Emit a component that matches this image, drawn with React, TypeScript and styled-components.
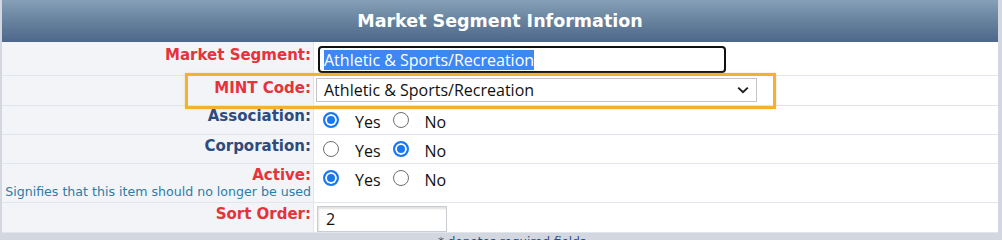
import { FC } from 'react';
import styled, { createGlobalStyle } from 'styled-components';

const colors = {
  page: '#d3d8e0',
  labelBg: '#f2f4f8',
  rule: '#e2e5eb',
  red: '#e5333c',
  blue: '#2d4b7d',
  hint: '#2f7ca4',
  radio: '#1877f2',
  highlight: '#3d87f0',
  annotate: '#f5b02e',
};

const LABEL_FONT = `'DejaVu Sans', Verdana, sans-serif`;
const FIELD_FONT = `'Open Sans', 'Segoe UI', sans-serif`;

const GlobalStyle = createGlobalStyle`
  html, body {
    margin: 0;
    padding: 0;
    background: ${colors.page};
    font-family: ${LABEL_FONT};
  }
`;

interface RadioPairProps {
  value: 'yes' | 'no';
}

const RadioPair: FC<RadioPairProps> = ({ value }) => (
  <RadioGroup>
    <RadioOption>
      <Radio $checked={value === 'yes'} />
      <RadioText>Yes</RadioText>
    </RadioOption>
    <RadioOption>
      <Radio $checked={value === 'no'} />
      <RadioText>No</RadioText>
    </RadioOption>
  </RadioGroup>
);

const App: FC = () => (
  <>
    <GlobalStyle />
    <Page>
      <Panel>
        <Header>Market Segment Information</Header>

        <Row $h={34}>
          <LabelCell $top={4}>
            <Label $required>Market Segment:</Label>
          </LabelCell>
          <ValueCell $pad='4px 0 0 4px'>
            <TextBox>
              <Selected>Athletic &amp; Sports/Recreation</Selected>
            </TextBox>
          </ValueCell>
        </Row>

        <Row $h={30}>
          <LabelCell $top={3}>
            <Label $required>MINT Code:</Label>
          </LabelCell>
          <ValueCell $pad='2px 0 0 2px'>
            <SelectBox>
              <span>Athletic &amp; Sports/Recreation</span>
              <svg width='12' height='8' viewBox='0 0 12 8'>
                <path d='M1.2 1.6 6 6.2l4.8-4.6' fill='none' stroke='#1d1d1d' strokeWidth='1.9' />
              </svg>
            </SelectBox>
          </ValueCell>
        </Row>

        <Row $h={29}>
          <LabelCell $top={1}>
            <Label>Association:</Label>
          </LabelCell>
          <ValueCell $pad='6px 0 0 9px'>
            <RadioPair value='yes' />
          </ValueCell>
        </Row>

        <Row $h={29}>
          <LabelCell $top={2}>
            <Label>Corporation:</Label>
          </LabelCell>
          <ValueCell $pad='6px 0 0 9px'>
            <RadioPair value='no' />
          </ValueCell>
        </Row>

        <Row $h={39}>
          <LabelCell $top={2}>
            <Label $required>Active:</Label>
            <Hint>Signifies that this item should no longer be used</Hint>
          </LabelCell>
          <ValueCell $pad='6px 0 0 9px'>
            <RadioPair value='yes' />
          </ValueCell>
        </Row>

        <Row $h={30}>
          <LabelCell $top={2}>
            <Label $required>Sort Order:</Label>
          </LabelCell>
          <ValueCell $pad='3px 0 0 3px'>
            <NumberBox>2</NumberBox>
          </ValueCell>
        </Row>

        <Callout />
      </Panel>
      <Footer>* denotes required fields</Footer>
    </Page>
  </>
);

const Page = styled.div`
  padding: 0 4px 0 2px;
`;

const Panel = styled.div`
  position: relative;
  background: #fff;
`;

const Header = styled.div`
  height: 42px;
  display: flex;
  align-items: center;
  justify-content: center;
  padding-bottom: 1px;
  box-sizing: border-box;
  background: linear-gradient(to bottom, #85a0b6 0%, #6a85a0 45%, #4d678a 100%);
  color: #fff;
  font-family: ${LABEL_FONT};
  font-weight: bold;
  font-size: 17.5px;
`;

const Row = styled.div<{ $h: number }>`
  display: grid;
  grid-template-columns: 312px 1fr;
  height: ${({ $h }) => $h}px;
  border-bottom: 1px solid ${colors.rule};
  box-sizing: border-box;
`;

const LabelCell = styled.div<{ $top: number }>`
  background: ${colors.labelBg};
  border-right: 1px solid ${colors.rule};
  text-align: right;
  padding: ${({ $top }) => $top}px 2px 0 0;
  display: flex;
  flex-direction: column;
  align-items: flex-end;
`;

const Label = styled.div<{ $required?: boolean }>`
  font-family: ${LABEL_FONT};
  font-weight: bold;
  font-size: 15px;
  line-height: 18px;
  color: ${({ $required }) => ($required ? colors.red : colors.blue)};
`;

const Hint = styled.div`
  font-family: ${LABEL_FONT};
  font-size: 12.6px;
  line-height: 14px;
  color: ${colors.hint};
  margin-top: 1px;
`;

const ValueCell = styled.div<{ $pad: string }>`
  padding: ${({ $pad }) => $pad};
  display: flex;
  align-items: flex-start;
  font-family: ${FIELD_FONT};
  font-size: 16px;
  color: #111;
`;

const TextBox = styled.div`
  width: 408px;
  height: 27px;
  border: 2px solid #111;
  border-radius: 4px;
  box-sizing: border-box;
  display: flex;
  align-items: center;
  padding-left: 4px;
`;

const Selected = styled.span`
  background: ${colors.highlight};
  color: #fff;
  line-height: 20px;
`;

const SelectBox = styled.div`
  width: 441px;
  height: 24px;
  border: 1px solid #c4c4c4;
  box-sizing: border-box;
  display: flex;
  align-items: center;
  justify-content: space-between;
  padding: 0 7px 0 7px;
  line-height: 20px;
  color: #111;
`;

const NumberBox = styled.div`
  width: 130px;
  height: 26px;
  border: 1px solid #c9ccd1;
  box-shadow: inset 1px 2px 2px rgba(0, 0, 0, 0.12);
  box-sizing: border-box;
  display: flex;
  align-items: center;
  padding-left: 8px;
  line-height: 20px;
`;

const RadioGroup = styled.div`
  display: flex;
  gap: 12px;
`;

const RadioOption = styled.label`
  display: flex;
  align-items: flex-start;
  gap: 16px;
`;

const Radio = styled.span<{ $checked: boolean }>`
  width: 16px;
  height: 16px;
  border-radius: 50%;
  box-sizing: border-box;
  ${({ $checked }) =>
    $checked
      ? `
    background: ${colors.radio};
    border: 2px solid ${colors.radio};
    box-shadow: inset 0 0 0 2px #fff;
  `
      : `
    background: #fff;
    border: 1px solid #6f6f6f;
  `}
`;

const RadioText = styled.span`
  line-height: 16px;
  padding-top: 2px;
`;

const Callout = styled.div`
  position: absolute;
  left: 183px;
  top: 73px;
  width: 591px;
  height: 36px;
  border: 3px solid ${colors.annotate};
  box-sizing: border-box;
  box-shadow: 0 0 2px rgba(245, 176, 46, 0.4);
  pointer-events: none;
`;

const Footer = styled.div`
  text-align: center;
  padding: 2px 0 0 24px;
  font-family: ${LABEL_FONT};
  font-size: 12px;
  line-height: 14px;
  color: ${colors.blue};
`;

export default App;
